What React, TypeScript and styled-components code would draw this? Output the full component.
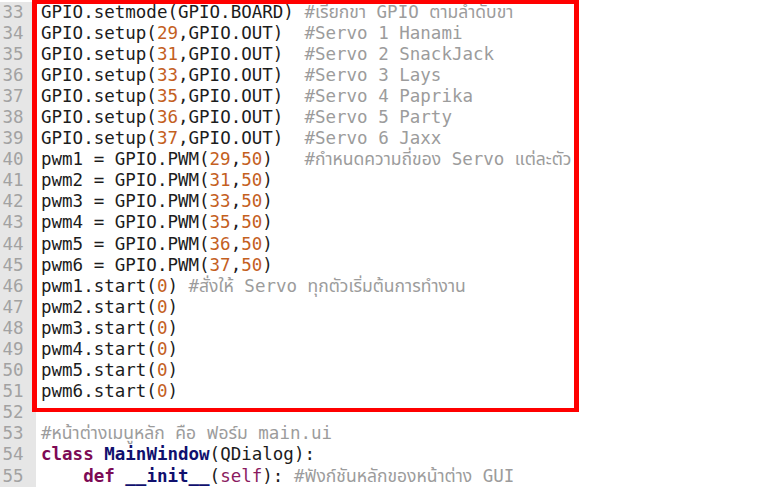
import React from 'react';
import styled, { createGlobalStyle } from 'styled-components';

const GlobalStyle = createGlobalStyle`
  html, body {
    margin: 0;
    background: #ffffff;
  }
`;

type Kind = 'plain' | 'num' | 'com' | 'kw' | 'name' | 'self';
type Token = [Kind, string];

// each line is a list of coloured tokens, numbered from 33
const lines: Token[][] = [
  [['plain', 'GPIO.setmode(GPIO.BOARD) '], ['com', '#เรียกขา GPIO ตามลำดับขา']],
  [['plain', 'GPIO.setup('], ['num', '29'], ['plain', ',GPIO.OUT)  '], ['com', '#Servo 1 Hanami']],
  [['plain', 'GPIO.setup('], ['num', '31'], ['plain', ',GPIO.OUT)  '], ['com', '#Servo 2 SnackJack']],
  [['plain', 'GPIO.setup('], ['num', '33'], ['plain', ',GPIO.OUT)  '], ['com', '#Servo 3 Lays']],
  [['plain', 'GPIO.setup('], ['num', '35'], ['plain', ',GPIO.OUT)  '], ['com', '#Servo 4 Paprika']],
  [['plain', 'GPIO.setup('], ['num', '36'], ['plain', ',GPIO.OUT)  '], ['com', '#Servo 5 Party']],
  [['plain', 'GPIO.setup('], ['num', '37'], ['plain', ',GPIO.OUT)  '], ['com', '#Servo 6 Jaxx']],
  [['plain', 'pwm1 = GPIO.PWM('], ['num', '29'], ['plain', ','], ['num', '50'], ['plain', ')   '], ['com', '#กำหนดความถี่ของ Servo แต่ละตัว']],
  [['plain', 'pwm2 = GPIO.PWM('], ['num', '31'], ['plain', ','], ['num', '50'], ['plain', ')']],
  [['plain', 'pwm3 = GPIO.PWM('], ['num', '33'], ['plain', ','], ['num', '50'], ['plain', ')']],
  [['plain', 'pwm4 = GPIO.PWM('], ['num', '35'], ['plain', ','], ['num', '50'], ['plain', ')']],
  [['plain', 'pwm5 = GPIO.PWM('], ['num', '36'], ['plain', ','], ['num', '50'], ['plain', ')']],
  [['plain', 'pwm6 = GPIO.PWM('], ['num', '37'], ['plain', ','], ['num', '50'], ['plain', ')']],
  [['plain', 'pwm1.start('], ['num', '0'], ['plain', ') '], ['com', '#สั่งให้ Servo ทุกตัวเริ่มต้นการทำงาน']],
  [['plain', 'pwm2.start('], ['num', '0'], ['plain', ')']],
  [['plain', 'pwm3.start('], ['num', '0'], ['plain', ')']],
  [['plain', 'pwm4.start('], ['num', '0'], ['plain', ')']],
  [['plain', 'pwm5.start('], ['num', '0'], ['plain', ')']],
  [['plain', 'pwm6.start('], ['num', '0'], ['plain', ')']],
  [],
  [['com', '#หน้าต่างเมนูหลัก คือ ฟอร์ม main.ui']],
  [['kw', 'class'], ['plain', ' '], ['name', 'MainWindow'], ['plain', '(QDialog):']],
  [['plain', '    '], ['kw', 'def'], ['plain', ' '], ['name', '__init__'], ['plain', '('], ['self', 'self'], ['plain', '): '], ['com', '#ฟังก์ชันหลักของหน้าต่าง GUI']],
];

const colours: Record<Kind, string> = {
  plain: '#1c1c1c',
  num: '#c4601e',
  com: '#9c9c9c',
  kw: '#7d0a55',
  name: '#10106e',
  self: '#8a1a60',
};

const Editor = styled.div`
  position: relative;
  width: 769px;
  height: 488px;
  overflow: hidden;
  background: #ffffff;
  font-family: 'DejaVu Sans Mono', 'Noto Sans Thai', 'Noto Sans Thai UI', 'Noto Sans', monospace;
  font-size: 17.5px;
  line-height: 21.1px;
`;

const Rows = styled.div`
  display: flex;
  flex-direction: column;
  padding-top: 1.5px;
`;

const Row = styled.div`
  display: flex;
  height: 21.1px;
  white-space: pre;
`;

const LineNo = styled.div`
  flex: 0 0 36px;
  box-sizing: border-box;
  padding-right: 12.5px;
  text-align: right;
  color: #a2a2a2;
  background: #e6e6e6;
`;

const Code = styled.div`
  padding-left: 5px;
`;

const Tok = styled.span<{ $kind: Kind }>`
  color: ${(p) => colours[p.$kind]};
  font-weight: ${(p) => (p.$kind === 'kw' || p.$kind === 'name' ? 700 : 400)};
`;

const Highlight = styled.div`
  position: absolute;
  left: 32px;
  top: 0;
  width: 547px;
  height: 412px;
  box-sizing: border-box;
  border: solid #ff0000;
  border-width: 4px 5px;
  pointer-events: none;
`;

export default function App() {
  return (
    <>
      <GlobalStyle />
      <Editor>
        <Rows>
          {lines.map((tokens, i) => (
            <Row key={i}>
              <LineNo>{33 + i}</LineNo>
              <Code>
                {tokens.map(([kind, text], j) => (
                  <Tok key={j} $kind={kind}>
                    {text}
                  </Tok>
                ))}
              </Code>
            </Row>
          ))}
        </Rows>
        <Highlight />
      </Editor>
    </>
  );
}
